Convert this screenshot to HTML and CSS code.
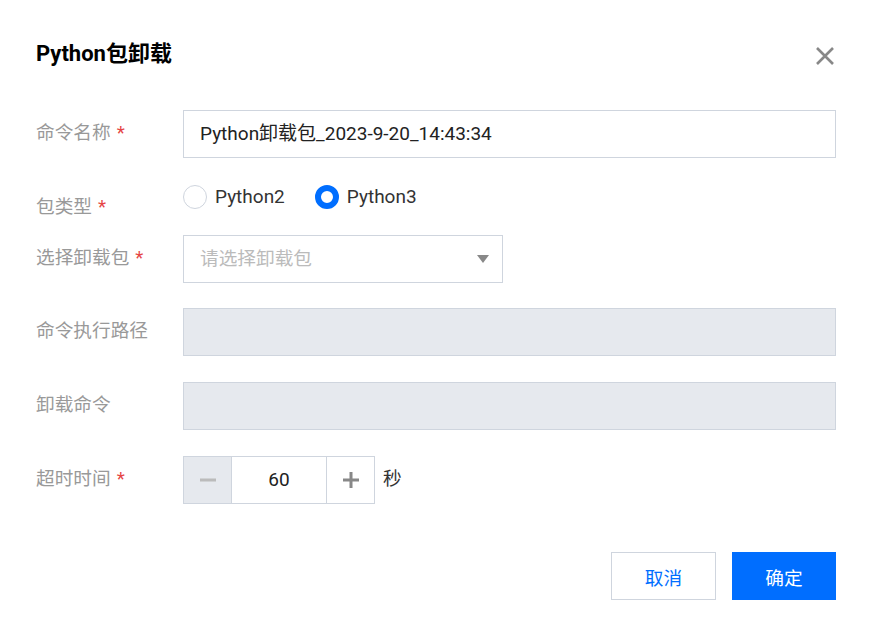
FILE: index.html
```html
<!DOCTYPE html>
<html>

<head>
    <title>Python包卸载</title>
    <link rel="stylesheet" href="styles.css">
</head>

<body>
    <div class="dialog">
        <div class="dialog-header">
            <h2 class="dialog-title">Python包卸载</h2>
            <span class="close-btn">
                <svg width="20" height="20" viewBox="0 0 20 20">
                    <path d="M2 2 L18 18 M18 2 L2 18" stroke="#888" stroke-width="2.6" fill="none" />
                </svg>
            </span>
        </div>

        <div class="form">
            <div class="form-row">
                <label class="form-label">命令名称<span class="required">*</span></label>
                <div class="input">Python卸载包_2023-9-20_14:43:34</div>
            </div>

            <div class="form-row radio-row">
                <label class="form-label">包类型<span class="required">*</span></label>
                <div class="radio-group">
                    <span class="radio"><span class="radio-circle"></span>Python2</span>
                    <span class="radio checked"><span class="radio-circle"></span>Python3</span>
                </div>
            </div>

            <div class="form-row select-row">
                <label class="form-label">选择卸载包<span class="required">*</span></label>
                <div class="input select">
                    <span class="placeholder">请选择卸载包</span>
                    <span class="caret"></span>
                </div>
            </div>

            <div class="form-row">
                <label class="form-label">命令执行路径</label>
                <div class="input disabled"></div>
            </div>

            <div class="form-row">
                <label class="form-label">卸载命令</label>
                <div class="input disabled"></div>
            </div>

            <div class="form-row">
                <label class="form-label">超时时间<span class="required">*</span></label>
                <div class="stepper">
                    <span class="step-btn minus">
                        <svg width="18" height="18" viewBox="0 0 18 18"><path d="M1 9 H17" stroke="#bbb" stroke-width="3" /></svg>
                    </span>
                    <span class="step-value">60</span>
                    <span class="step-btn plus">
                        <svg width="18" height="18" viewBox="0 0 18 18"><path d="M1 9 H17 M9 1 V17" stroke="#888" stroke-width="3" /></svg>
                    </span>
                </div>
                <span class="unit">秒</span>
            </div>
        </div>

        <div class="dialog-footer">
            <button class="btn">取消</button>
            <button class="btn btn-primary">确定</button>
        </div>
    </div>
</body>

</html>
```

FILE: styles.css
```css
body {
    margin: 0;
    background-color: #fff;
    font-family: Roboto, "Noto Sans CJK SC", sans-serif;
    color: #333;
}

.dialog {
    padding: 36px 38px 0 36px;
}

.dialog-header {
    display: flex;
    justify-content: space-between;
    align-items: center;
    height: 36px;
}

.dialog-title {
    margin: 0;
    font-size: 22px;
    font-weight: bold;
    line-height: 36px;
    color: #000;
}

.close-btn {
    display: flex;
    margin-top: 4px;
    margin-right: 1px;
}

.form {
    margin-top: 38px;
}

.form-row {
    display: flex;
    align-items: flex-start;
    margin-bottom: 26px;
}

.form-row:last-child {
    margin-bottom: 0;
}

.form-label {
    width: 147px;
    flex-shrink: 0;
    font-size: 18.67px;
    line-height: 46px;
    color: #999;
}

.required {
    color: #e54545;
    margin-left: 6px;
}

.input {
    flex: 1;
    height: 48px;
    box-sizing: border-box;
    border: 1px solid #cfd5de;
    padding: 0 16px;
    font-size: 19px;
    line-height: 46px;
    color: #222;
}

.input.disabled {
    background-color: #e6e9ee;
}

.select-row {
    margin-bottom: 25px;
}

.select {
    flex: none;
    width: 320px;
    display: flex;
    justify-content: space-between;
    align-items: center;
}

.placeholder {
    color: #bbb;
    font-size: 18.67px;
}

.caret {
    width: 0;
    height: 0;
    border-left: 6.5px solid transparent;
    border-right: 6.5px solid transparent;
    border-top: 8px solid #888;
    margin-right: -3px;
}

.radio-row {
    height: 25px;
}

.radio-group {
    display: flex;
    align-items: center;
    gap: 30px;
    height: 25px;
}

.radio {
    display: flex;
    align-items: center;
    gap: 8px;
    font-size: 19px;
    color: #333;
}

.radio-circle {
    width: 24px;
    height: 24px;
    box-sizing: border-box;
    border: 1px solid #cfd5de;
    border-radius: 50%;
}

.radio.checked .radio-circle {
    border: 6.5px solid #006eff;
}

.stepper {
    display: flex;
    height: 48px;
    box-sizing: border-box;
    border: 1px solid #cfd5de;
}

.step-btn {
    width: 47px;
    display: flex;
    justify-content: center;
    align-items: center;
}

.step-btn.minus {
    background-color: #e6e9ee;
    border-right: 1px solid #cfd5de;
}

.step-btn.plus {
    border-left: 1px solid #cfd5de;
}

.step-value {
    width: 94px;
    text-align: center;
    font-size: 19px;
    line-height: 46px;
    color: #222;
}

.unit {
    margin-left: 8px;
    font-size: 18.67px;
    line-height: 46px;
    color: #333;
}

.dialog-footer {
    display: flex;
    justify-content: flex-end;
    gap: 16px;
    margin-top: 48px;
}

.btn {
    height: 48px;
    min-width: 105px;
    box-sizing: border-box;
    border: 1px solid #cfd5de;
    background-color: #fff;
    color: #006eff;
    font-family: Roboto, "Noto Sans CJK SC", sans-serif;
    font-size: 18.67px;
    padding: 0 20px;
    cursor: pointer;
}

.btn-primary {
    min-width: 104px;
    background-color: #006eff;
    border-color: #006eff;
    color: #fff;
}
```
